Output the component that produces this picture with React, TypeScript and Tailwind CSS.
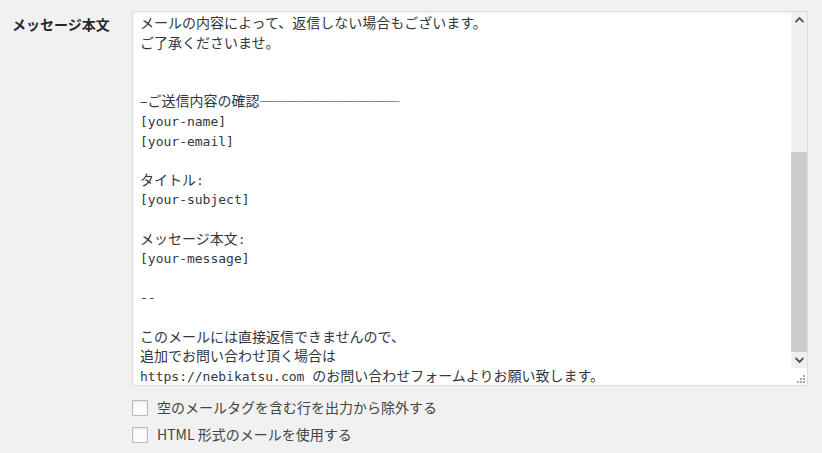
type Seg = { t: string; mono?: boolean };

const lines: Seg[][] = [
  [{ t: 'メールの内容によって、返信しない場合もございます。' }],
  [{ t: 'ご了承くださいませ。' }],
  [],
  [],
  [{ t: '–ご送信内容の確認──────────' }],
  [{ t: '[your-name]', mono: true }],
  [{ t: '[your-email]', mono: true }],
  [],
  [{ t: 'タイトル' }, { t: ':', mono: true }],
  [{ t: '[your-subject]', mono: true }],
  [],
  [{ t: 'メッセージ本文' }, { t: ':', mono: true }],
  [{ t: '[your-message]', mono: true }],
  [],
  [{ t: '--', mono: true }],
  [],
  [{ t: 'このメールには直接返信できませんので、' }],
  [{ t: '追加でお問い合わせ頂く場合は' }],
  [{ t: 'https://nebikatsu.com ', mono: true }, { t: 'のお問い合わせフォームよりお願い致します。' }],
];

function Chevron({ up }: { up?: boolean }) {
  return (
    <svg width="9" height="6" viewBox="0 0 9 6" className={up ? '' : 'rotate-180'}>
      <path d="M0.5 5 L4.5 1 L8.5 5" fill="none" stroke="#505050" strokeWidth="1.8" />
    </svg>
  );
}

function Grip() {
  return (
    <svg width="10" height="10" viewBox="0 0 10 10">
      <rect x="7" y="1" width="2" height="2" fill="#a8a8a8" />
      <rect x="4" y="4" width="2" height="2" fill="#a8a8a8" />
      <rect x="7" y="4" width="2" height="2" fill="#a8a8a8" />
      <rect x="1" y="7" width="2" height="2" fill="#a8a8a8" />
      <rect x="4" y="7" width="2" height="2" fill="#a8a8a8" />
      <rect x="7" y="7" width="2" height="2" fill="#a8a8a8" />
    </svg>
  );
}

function Check({ label }: { label: string }) {
  return (
    <label className="flex items-center h-[27px] gap-[9px] text-[14px] text-[#444]">
      <span className="w-4 h-4 border border-[#b4b9be] bg-[#fbfbfb] rounded-[1px] shadow-[inset_0_1px_2px_rgba(0,0,0,0.08)]" />
      <span>{label}</span>
    </label>
  );
}

export default function App() {
  return (
    <div
      className="w-[822px] h-[453px] bg-[#f1f1f1] flex overflow-hidden"
      style={{ fontFamily: '"Noto Sans CJK JP", "Noto Sans", sans-serif' }}
    >
      <div className="w-[132px] shrink-0 pl-3 pt-[14px] text-[14px] font-bold text-[#23282d]">メッセージ本文</div>
      <div className="pt-[11px]">
        <div className="w-[676px] h-[375px] border border-[#dddddd] bg-white flex shadow-[inset_0_1px_2px_rgba(0,0,0,0.07)]">
          <div className="flex-1 overflow-hidden pl-[7px] pt-[1px] text-[14px] leading-[19.6px] text-[#32373c] whitespace-pre">
            {lines.map((ln, i) => (
              <div key={i} className="h-[19.6px]">
                {ln.map((s, j) =>
                  s.mono ? (
                    <span key={j} className="text-[13px]" style={{ fontFamily: '"DejaVu Sans Mono", monospace' }}>
                      {s.t}
                    </span>
                  ) : (
                    <span key={j}>{s.t}</span>
                  ),
                )}
              </div>
            ))}
          </div>
          <div className="w-4 flex flex-col">
            <div className="h-4 bg-[#f0f0f0] flex items-center justify-center">
              <Chevron up />
            </div>
            <div className="flex-1 bg-[#f0f0f0] flex flex-col justify-end">
              <div className="h-[200px] bg-[#cdcdcd]" />
            </div>
            <div className="h-4 bg-[#f0f0f0] flex items-center justify-center">
              <Chevron />
            </div>
            <div className="h-[17px] bg-white flex items-end justify-end pb-[1px] pr-[1px]">
              <Grip />
            </div>
          </div>
        </div>
        <div className="pt-[8px]">
          <Check label="空のメールタグを含む行を出力から除外する" />
          <Check label="HTML 形式のメールを使用する" />
        </div>
      </div>
    </div>
  );
}
